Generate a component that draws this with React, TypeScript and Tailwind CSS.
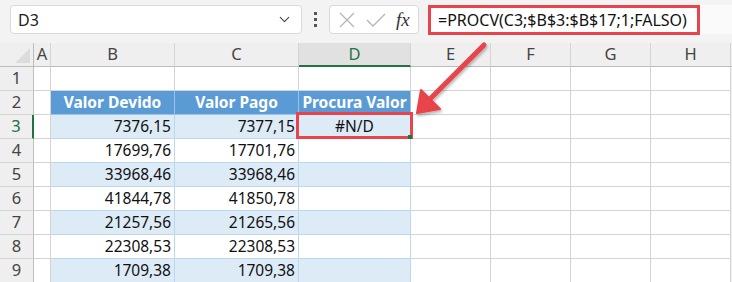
import { ChevronDown } from "lucide-react";

const cols = [
  { key: "A", w: "w-[17px]" },
  { key: "B", w: "w-[124px]" },
  { key: "C", w: "w-[124px]" },
  { key: "D", w: "w-[112px]" },
  { key: "E", w: "w-[80px]" },
  { key: "F", w: "w-[80px]" },
  { key: "G", w: "w-[80px]" },
  { key: "H", w: "w-[80px]" },
];

const data = [
  ["7376,15", "7377,15", "#N/D"],
  ["17699,76", "17701,76", ""],
  ["33968,46", "33968,46", ""],
  ["41844,78", "41850,78", ""],
  ["21257,56", "21265,56", ""],
  ["22308,53", "22308,53", ""],
  ["1709,38", "1709,38", ""],
];

const headers = ["Valor Devido", "Valor Pago", "Procura Valor"];

const Toolbar = () => (
  <div className="flex items-start h-[43px] pt-[5px]">
    <div className="ml-[10px] w-[292px] h-[29px] bg-white border border-[#d9d9d9] rounded-[4px] flex items-center pl-[7px] pr-[8px]">
      <span className="text-[16px] text-[#222] flex-1">D3</span>
      <ChevronDown size={17} strokeWidth={1.6} className="text-[#444]" />
    </div>
    <div className="w-[27px] h-[29px] flex flex-col items-center justify-center gap-[3px]">
      <span className="w-[3px] h-[3px] bg-[#555]" />
      <span className="w-[3px] h-[3px] bg-[#555]" />
      <span className="w-[3px] h-[3px] bg-[#555]" />
    </div>
    <div className="w-[90px] h-[29px] bg-white border border-[#d9d9d9] rounded-[4px] flex items-center pl-[8px] gap-[10px]">
      <svg width="18" height="18" viewBox="0 0 18 18">
        <path d="M2 2 L16 16 M16 2 L2 16" stroke="#b5b5b5" strokeWidth="1.3" fill="none" />
      </svg>
      <svg width="20" height="18" viewBox="0 0 20 18">
        <path d="M1 9 L7 15 L19 3" stroke="#b5b5b5" strokeWidth="1.3" fill="none" />
      </svg>
      <span className="text-[19px] italic text-[#333] leading-none font-['Liberation_Serif',serif]">
        fx
      </span>
    </div>
    <div className="ml-[9px] w-[272px] h-[30px] bg-white border-[3px] border-[#e8444b] flex items-center pl-[7px]">
      <span className="text-[16px] text-[#111] whitespace-nowrap">
        =PROCV(C3;$B$3:$B$17;1;FALSO)
      </span>
    </div>
    <div className="flex-1 h-[29px] bg-[#fafafa]" />
  </div>
);

const ColumnHeader = () => (
  <div className="flex h-[24px]">
    <div className="w-[34px] h-full bg-[#efefef] border-r border-b border-[#bdbdbd] relative overflow-hidden">
      <div className="absolute right-[3px] bottom-[3px] w-0 h-0 border-l-[15px] border-l-transparent border-b-[15px] border-b-[#dcdcdc]" />
    </div>
    {cols.map((c) => {
      const sel = c.key === "D";
      return (
        <div
          key={c.key}
          className={`${c.w} h-full flex items-center justify-center text-[16.5px] border-r border-[#d4d4d4] ${
            sel
              ? "bg-[#e1e1e1] text-[#217346] border-b-2 border-b-[#217346]"
              : "bg-[#efefef] text-[#444] border-b border-b-[#bdbdbd]"
          }`}
        >
          {c.key}
        </div>
      );
    })}
    <div className="flex-1 h-full bg-[#efefef] border-b border-[#bdbdbd]" />
  </div>
);

const RowHead = ({ n }: { n: number }) => (
  <div
    className={`w-[34px] h-full bg-[#efefef] flex items-center justify-center text-[16.5px] border-b border-b-[#d4d4d4] ${
      n === 3
        ? "text-[#217346] border-r-2 border-r-[#217346] bg-[#e1e1e1]"
        : "text-[#444] border-r border-r-[#bdbdbd]"
    }`}
  >
    {n}
  </div>
);

const Plain = ({ w }: { w: string }) => (
  <div className={`${w} h-full bg-white border-r border-b border-[#d4d4d4]`} />
);

const Sheet = () => {
  const rows = [];
  rows.push(
    <div key={1} className="flex h-[24px]">
      <RowHead n={1} />
      {cols.map((c) => (
        <Plain key={c.key} w={c.w} />
      ))}
    </div>
  );
  rows.push(
    <div key={2} className="flex h-[24px]">
      <RowHead n={2} />
      <Plain w="w-[17px]" />
      {headers.map((h, i) => (
        <div
          key={h}
          className={`${cols[i + 1].w} h-full bg-[#5b9bd5] text-white font-bold text-[15.5px] flex items-center justify-center border-r border-b border-[#9bc2e6]`}
        >
          {h}
        </div>
      ))}
      {cols.slice(4).map((c) => (
        <Plain key={c.key} w={c.w} />
      ))}
    </div>
  );
  data.forEach((r, i) => {
    const n = i + 3;
    const band = n % 2 === 1 ? "bg-[#ddebf7]" : "bg-white";
    rows.push(
      <div key={n} className="flex h-[24px]">
        <RowHead n={n} />
        <Plain w="w-[17px]" />
        {r.map((v, j) => (
          <div
            key={j}
            className={`${cols[j + 1].w} h-full ${band} text-[15.5px] text-[#111] flex items-center px-[3px] border-r border-b border-[#bdd7ee] ${
              j === 2 ? "justify-center" : "justify-end"
            }`}
          >
            {v}
          </div>
        ))}
        {cols.slice(4).map((c) => (
          <Plain key={c.key} w={c.w} />
        ))}
      </div>
    );
  });
  return <div>{rows}</div>;
};

export default function App() {
  return (
    <div className="relative w-[732px] h-[282px] overflow-hidden bg-[#f3f3f3] font-['Noto_Sans',sans-serif]">
      <Toolbar />
      <ColumnHeader />
      <Sheet />

      {/* highlight on D3 */}
      <div className="absolute left-[296px] top-[112px] w-[117px] h-[27px] border-[3px] border-[#e8444b]" />
      <div className="absolute left-[408px] top-[135px] w-[4px] h-[4px] bg-[#217346]" />

      {/* arrow */}
      <svg className="absolute left-0 top-0" width="732" height="282" viewBox="0 0 732 282">
        <defs>
          <filter id="sh" x="-20%" y="-20%" width="140%" height="140%">
            <feDropShadow dx="1" dy="2" stdDeviation="1.5" floodColor="#000" floodOpacity="0.3" />
          </filter>
        </defs>
        <g filter="url(#sh)">
          <path d="M484 45 L428 101" stroke="#e8444b" strokeWidth="5" strokeLinecap="round" fill="none" />
          <path d="M417 113 L421 90 L440 109 Z" fill="#e8444b" stroke="#e8444b" strokeWidth="2" strokeLinejoin="round" />
        </g>
      </svg>
    </div>
  );
}
